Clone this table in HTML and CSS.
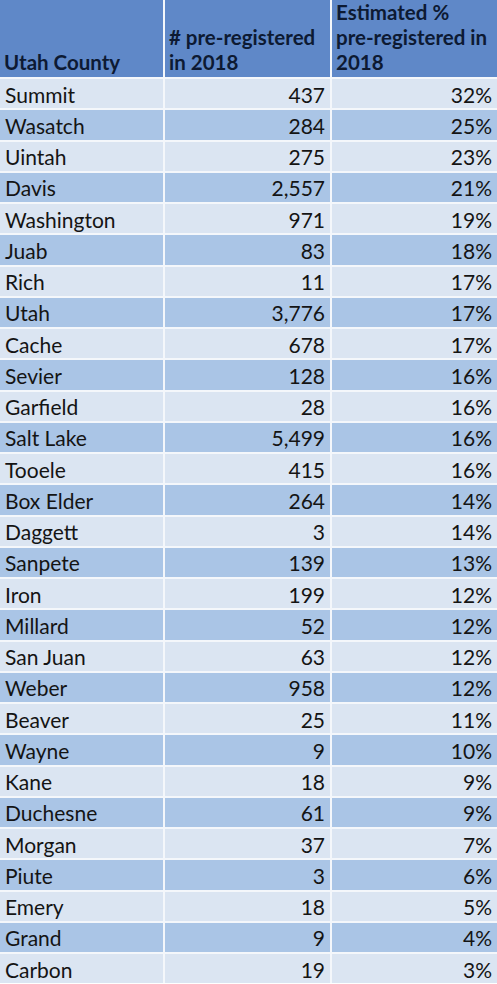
FILE: index.html
```html
<!DOCTYPE html>
<html>
<head>
<meta charset="utf-8">
<link rel="stylesheet" href="styles.css">
</head>
<body>
<div class="sheet">
  <div class="cell head">Utah County</div>
  <div class="cell head">#&nbsp;pre-registered<br>in 2018</div>
  <div class="cell head">Estimated %<br>pre-registered in<br>2018</div>

  <div class="cell l">Summit</div><div class="cell l num">437</div><div class="cell l num">32%</div>
  <div class="cell d">Wasatch</div><div class="cell d num">284</div><div class="cell d num">25%</div>
  <div class="cell l">Uintah</div><div class="cell l num">275</div><div class="cell l num">23%</div>
  <div class="cell d">Davis</div><div class="cell d num">2,557</div><div class="cell d num">21%</div>
  <div class="cell l">Washington</div><div class="cell l num">971</div><div class="cell l num">19%</div>
  <div class="cell d">Juab</div><div class="cell d num">83</div><div class="cell d num">18%</div>
  <div class="cell l">Rich</div><div class="cell l num">11</div><div class="cell l num">17%</div>
  <div class="cell d">Utah</div><div class="cell d num">3,776</div><div class="cell d num">17%</div>
  <div class="cell l">Cache</div><div class="cell l num">678</div><div class="cell l num">17%</div>
  <div class="cell d">Sevier</div><div class="cell d num">128</div><div class="cell d num">16%</div>
  <div class="cell l">Garfield</div><div class="cell l num">28</div><div class="cell l num">16%</div>
  <div class="cell d">Salt Lake</div><div class="cell d num">5,499</div><div class="cell d num">16%</div>
  <div class="cell l">Tooele</div><div class="cell l num">415</div><div class="cell l num">16%</div>
  <div class="cell d">Box Elder</div><div class="cell d num">264</div><div class="cell d num">14%</div>
  <div class="cell l">Daggett</div><div class="cell l num">3</div><div class="cell l num">14%</div>
  <div class="cell d">Sanpete</div><div class="cell d num">139</div><div class="cell d num">13%</div>
  <div class="cell l">Iron</div><div class="cell l num">199</div><div class="cell l num">12%</div>
  <div class="cell d">Millard</div><div class="cell d num">52</div><div class="cell d num">12%</div>
  <div class="cell l">San Juan</div><div class="cell l num">63</div><div class="cell l num">12%</div>
  <div class="cell d">Weber</div><div class="cell d num">958</div><div class="cell d num">12%</div>
  <div class="cell l">Beaver</div><div class="cell l num">25</div><div class="cell l num">11%</div>
  <div class="cell d">Wayne</div><div class="cell d num">9</div><div class="cell d num">10%</div>
  <div class="cell l">Kane</div><div class="cell l num">18</div><div class="cell l num">9%</div>
  <div class="cell d">Duchesne</div><div class="cell d num">61</div><div class="cell d num">9%</div>
  <div class="cell l">Morgan</div><div class="cell l num">37</div><div class="cell l num">7%</div>
  <div class="cell d">Piute</div><div class="cell d num">3</div><div class="cell d num">6%</div>
  <div class="cell l">Emery</div><div class="cell l num">18</div><div class="cell l num">5%</div>
  <div class="cell d">Grand</div><div class="cell d num">9</div><div class="cell d num">4%</div>
  <div class="cell l">Carbon</div><div class="cell l num">19</div><div class="cell l num">3%</div>
</div>
</body>
</html>
```

FILE: styles.css
```css
html, body {
  margin: 0;
  padding: 0;
  background: #ffffff;
}
.sheet {
  display: grid;
  grid-template-columns: 163px 165px 165px;
  grid-template-rows: 77px repeat(29, 29.25px);
  gap: 2px;
  width: 497px;
  background: #f4f7fb;
  font-family: Lato, "Open Sans", sans-serif;
  font-size: 21px;
  color: #141414;
}
.cell {
  display: flex;
  align-items: center;
  padding: 1px 5px 0 5px;
  box-sizing: border-box;
  white-space: nowrap;
}
.head {
  background: #5f88c8;
  color: #0d1a33;
  font-weight: bold;
  font-size: 20.5px;
  align-items: flex-end;
  line-height: 25px;
  padding: 0 2px 2px 4px;
}
.l {
  background: #dbe5f2;
}
.d {
  background: #aac5e6;
}
.num {
  justify-content: flex-end;
}
```
